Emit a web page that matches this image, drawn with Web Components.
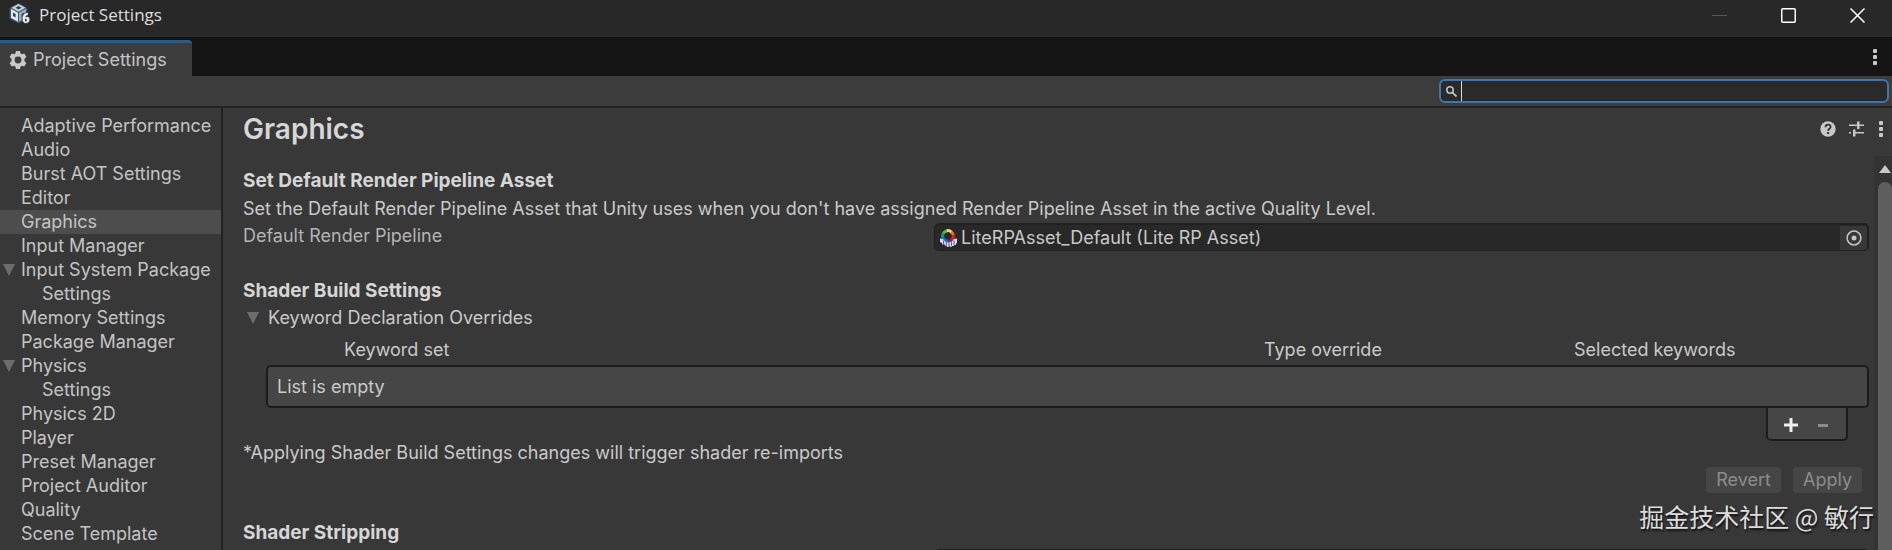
<!DOCTYPE html>
<html lang="en">
<head>
<meta charset="utf-8">
<title>Project Settings</title>
<style>
  body { margin: 0; background: #383838; }
</style>
</head>
<body>
<settings-window></settings-window>

<script>
const BASE = `
  *, *::before, *::after { box-sizing: border-box; }
  button { all: unset; box-sizing: border-box; display: flex; align-items: center; justify-content: center; }
  svg { display: block; }
  a { color: inherit; text-decoration: none; }
  h1, h2, p, ul { margin: 0; padding: 0; }
`;

function define(name, markup, setup) {
  const template = document.createElement('template');
  template.innerHTML = markup;
  customElements.define(name, class extends HTMLElement {
    constructor() {
      super();
      const root = this.attachShadow({ mode: 'open' });
      root.append(template.content.cloneNode(true));
      const base = document.createElement('style');
      base.textContent = BASE;
      root.prepend(base);
    }
    connectedCallback() { if (setup) setup(this, this.shadowRoot); }
  });
}

const DOTS = `<svg width="4" height="16" viewBox="0 0 4 16" fill="#c8c8c8"><rect y="0" width="4" height="4" rx="1"/><rect y="6" width="4" height="4" rx="1"/><rect y="12" width="4" height="4" rx="1"/></svg>`;

define('window-titlebar', `
<style>
  :host { display: flex; align-items: flex-start; height: 37px; padding: 3px 0 0 9px; background: #282828;
    color: #dedede; font: 17px/24px "Open Sans", "Noto Sans", sans-serif; }
  .name { flex: 1; padding-left: 8px; }
  button { width: 69px; height: 24px; }
</style>
<svg width="22" height="22" viewBox="0 0 22 22">
  <path d="M9.500 0 18.500 5v10.500L9.500 20.500.500 15.500V5Z" fill="#46535f"/>
  <path d="M9.500 1 16.500 4.800 9.500 8.800 2.500 4.800Z" fill="#c3d5e4"/>
  <path d="M2 5.800 9 9.800v9L2 15Z" fill="#dbe8f2"/>
  <path d="M17 5.800 10 9.800v9l7-3.800Z" fill="#9db1c3"/>
  <path d="M9.500 3 12.500 4.700 9.500 6.400 6.500 4.700ZM4 9.500l2.600 1.500v3.500L4 13ZM15 9.500 12.500 11v3.500L15 13Z" fill="#34424f"/>
  <path d="M19.500 9.500c-4.500-.3-6.500 2.500-6.500 6.500 0 2.800 1.400 4.500 3.700 4.500 2.500 0 4.300-1.700 4.300-4 0-1.900-1.200-3-2.800-3-.6 0-1 .1-1.400.3.400-1 1.400-1.700 2.700-1.800Z" fill="#e7edf2" stroke="#2c3640"/>
  <ellipse cx="16.900" cy="17" rx="1" ry="1.500" fill="#34424f"/>
</svg>
<span class="name"><slot></slot></span>
<button aria-label="Minimize" disabled><svg width="15" height="15" viewBox="0 0 15 15"><path d="M0 7.500h15" stroke="#555"/></svg></button>
<button aria-label="Maximize"><svg width="15" height="15" viewBox="0 0 15 15"><rect x=".75" y=".75" width="13.500" height="13.500" rx="1" fill="none" stroke="#fff" stroke-width="1.500"/></svg></button>
<button aria-label="Close"><svg width="15" height="15" viewBox="0 0 15 15"><path d="M.5.5l14 14M14.500.5l-14 14" stroke="#fff" stroke-width="1.500"/></svg></button>
`);

define('tab-strip', `
<style>
  :host { display: flex; justify-content: space-between; height: 39px; padding-top: 3px; background: #141414; color: #c4c4c4; }
  .tab { justify-content: flex-start; gap: 6px; height: 36px; width: 192px; padding: 0 9px; background: #3c3c3c;
    border-top: 3px solid #2c5d87; border-radius: 0 4px 0 0; font-size: 18px; line-height: 24px; white-space: nowrap; }
  .menu { width: 34px; height: 34px; }
</style>
<button class="tab" role="tab" aria-selected="true">
  <svg width="18" height="18" viewBox="0 0 18 18" fill="#c8c8c8"><path fill-rule="evenodd" d="M6.900 0h4.200l.5 2.400 1.300.8 2.400-.8 2.100 3.600-1.900 1.700v2.600l1.900 1.700-2.100 3.600-2.400-.8-1.300.8-.5 2.400H6.900l-.5-2.400-1.300-.8-2.400.8L.6 12l1.900-1.700V7.700L.6 6l2.100-3.600 2.400.8 1.300-.8ZM9 5.600a3.400 3.400 0 1 0 0 6.800 3.400 3.400 0 0 0 0-6.800Z"/></svg>
  <slot></slot>
</button>
<button class="menu" aria-label="Tab menu">${DOTS}</button>
`);

define('search-bar', `
<style>
  :host { display: flex; justify-content: flex-end; height: 32px; padding: 3px 3px 0; background: #3c3c3c; border-bottom: 2px solid #232323; }
  label { display: flex; align-items: center; width: 450px; height: 24px; padding-left: 5px; background: #2a2a2a;
    border: 2px solid #3f75a8; border-radius: 6px; }
  .caret { width: 1px; height: 20px; margin-left: 4px; background: #d8d8d8; }
  input { flex: 1; min-width: 0; height: 20px; padding: 0 4px; border: 0; outline: 0; background: none; color: #d2d2d2; font: inherit; }
</style>
<label>
  <svg width="11" height="11" viewBox="0 0 11 11" fill="none" stroke="#c4c4c4"><circle cx="4" cy="4" r="3.200" stroke-width="1.500"/><path d="M6.300 6.300l4.200 4.200" stroke-width="1.800"/></svg>
  <span class="caret"></span>
  <input type="text" aria-label="Search settings">
</label>
`);

define('tree-item', `
<style>
  :host { display: block; }
  a { display: flex; align-items: center; height: 24px; padding-left: 2px; white-space: nowrap; }
  .arrow { flex: none; width: 19px; }
  :host([child]) .arrow { width: 40px; }
  :host([selected]) a { background: #4d4d4d; }
  .arrow svg { display: none; }
  :host([open]) .arrow svg { display: block; }
</style>
<a href="#"><span class="arrow"><svg width="14" height="12" viewBox="0 0 14 12"><path d="M1 0h12L7 12Z" fill="#6c6c6c"/></svg></span><slot></slot></a>
`);

define('settings-tree', `
<style>
  :host { display: block; flex: none; width: 223px; padding-top: 6px; border-right: 2px solid #232323; color: #c4c4c4; overflow: hidden; }
</style>
<nav aria-label="Settings"><slot></slot></nav>
`);

define('page-header', `
<style>
  :host { display: flex; align-items: flex-start; height: 48px; padding: 2px 0 0 20px; color: #d6d6d6; }
  h1 { flex: 1; font-size: 28px; line-height: 38px; font-weight: 600; }
  button { width: 28px; height: 38px; }
  .menu { width: 22px; }
</style>
<h1><slot></slot></h1>
<button aria-label="Help"><svg width="16" height="16" viewBox="0 0 16 16"><circle cx="8" cy="8" r="7.700" fill="#c8c8c8"/><path d="M5.500 6.200C5.500 4.600 6.500 3.700 8 3.700s2.600.9 2.600 2.200c0 1.800-2.500 1.900-2.500 3.900" fill="none" stroke="#333" stroke-width="1.800"/><rect x="7.100" y="11" width="2" height="2" fill="#333"/></svg></button>
<button aria-label="Presets"><svg width="16" height="16" viewBox="0 0 16 16" fill="#c8c8c8"><path d="M1 3.500h8V.500h2.500v3H16V5h-4.500v3H9V5H1ZM1 11h2v1.500H1ZM5 8.500h2.500V11H16v1.500H7.500V15.500H5Z"/></svg></button>
<button class="menu" aria-label="More">${DOTS}</button>
`);

define('object-field', `
<style>
  :host { display: grid; grid-template-columns: 42.5% 1fr; height: 28px; margin-top: 2px; }
  label { line-height: 26px; color: #b4b4b4; }
  .field { display: flex; align-items: center; height: 28px; padding-left: 5px; background: #282828; border: 1px solid #202020; border-width: 2px 2px 1px 1px; border-radius: 5px; }
  svg { flex: none; }
  input { flex: 1; min-width: 0; height: 24px; padding: 0 0 0 4px; border: 0; outline: 0; background: none; color: #c8c8c8; font: inherit; }
  button { width: 27px; height: 24px; background: #373737; border-radius: 0 3px 3px 0; }
  :host([bare]) .field > * { visibility: hidden; }
</style>
<label for="value"></label>
<div class="field">
  <svg width="17" height="18" viewBox="0 0 17 18">
    <g fill="none" stroke-width="3">
      <path d="M3.300 9.500A5.300 5.300 0 0 1 3.500 4" stroke="#149a72"/>
      <path d="M3.400 4.300A5.300 5.300 0 0 1 7 1.700" stroke="#59bd3e"/>
      <path d="M6.800 1.700a5.300 5.300 0 0 1 4.700 1.400" stroke="#efd58b"/>
      <path d="M11.200 2.900A5.300 5.300 0 0 1 13.300 6" stroke="#f07824"/>
      <path d="M13.300 5.800a5.300 5.300 0 0 1-1.800 5.200" stroke="#e01c28"/>
      <path d="M11.800 10.800a5.300 5.300 0 0 1-4 1.200" stroke="#93203f"/>
      <path d="M8 12a5.300 5.300 0 0 1-5-3.500" stroke="#1769cf"/>
    </g>
    <path d="M0 9.500l3 .5 2 2.500 3 1 4-1 2-2.500 3-.5v4.500l-1 .5v1.500h-2V17h-2v1h-2v-1h-1v1H7v-1H5v-1.500H2V14L0 13Z" fill="#d4dcf2"/>
    <path d="M3.500 11.500V16M6.300 13v4.500M9 13.500V18M11.500 13v4.500M14 11.500V16" stroke="#4a5270" stroke-width=".9"/>
  </svg>
  <input id="value" type="text" readonly>
  <button aria-label="Select object"><svg width="16" height="16" viewBox="0 0 16 16"><circle cx="8" cy="8" r="6.900" fill="none" stroke="#c4c4c4" stroke-width="1.500"/><circle cx="8" cy="8" r="2.500" fill="#c4c4c4"/></svg></button>
</div>
`, (host, root) => {
  root.querySelector('label').textContent = host.getAttribute('label') || '';
  root.querySelector('input').value = host.getAttribute('value') || '';
});

define('settings-section', `
<style>
  :host { display: block; padding-bottom: 26px; }
  h2 { font-size: 19px; line-height: 28px; font-weight: 700; color: #d6d6d6; }
</style>
<h2></h2><slot></slot>
`, (host, root) => { root.querySelector('h2').textContent = host.getAttribute('heading'); });

define('keyword-list', `
<style>
  :host { display: flex; flex-direction: column; }
  .fold { align-self: flex-start; gap: 8px; height: 26px; padding-left: 3px; }
  table { table-layout: fixed; width: calc(100% - 23px); margin: 4px 0 0 23px; border-collapse: separate; border-spacing: 0; }
  th { height: 30px; padding: 0 0 1px 5px; font-weight: 400; line-height: 24px; text-align: left; }
  th:first-child { padding-left: 78px; }
  .type { width: 310px; }
  .selected { width: 300px; }
  td { height: 43px; padding: 0 9px; background: #464646; border: 2px solid #1c1c1c; border-radius: 5px; }
  .actions { display: flex; align-self: flex-end; width: 82px; height: 33px; margin-right: 21px; padding: 0 7px; background: #464646;
    border: 2px solid #1c1c1c; border-top: 0; border-radius: 0 0 5px 5px; }
  .actions button { width: 32px; height: 34px; }
</style>
<button class="fold" aria-expanded="true"><svg width="14" height="12" viewBox="0 0 14 12"><path d="M1 0h12L7 12Z" fill="#6c6c6c"/></svg><slot></slot></button>
<table>
  <thead><tr><th>Keyword set</th><th class="type">Type override</th><th class="selected">Selected keywords</th></tr></thead>
  <tbody><tr><td colspan="3">List is empty</td></tr></tbody>
</table>
<div class="actions">
  <button aria-label="Add"><svg width="14" height="14" viewBox="0 0 14 14"><path d="M7 0v14M0 7h14" stroke="#eee" stroke-width="3"/></svg></button>
  <button aria-label="Remove" disabled><svg width="10" height="3" viewBox="0 0 10 3"><path d="M0 1.500h10" stroke="#8c8c8c" stroke-width="3"/></svg></button>
</div>
`);

define('apply-bar', `
<style>
  :host { display: flex; justify-content: flex-end; gap: 12px; margin-top: 2px; padding-right: 7px; }
  button { height: 26px; padding: 0 10px; background: #464646; border-radius: 4px; color: #8c8c8c; line-height: 24px; }
</style>
<button disabled>Revert</button><button disabled>Apply</button>
`);

define('scroll-rail', `
<style>
  :host { display: flex; flex-direction: column; flex: none; width: 18px; padding-left: 4px; background: #333; overflow: hidden; }
  button { width: 14px; height: 26px; }
  .thumb { flex: 1; background: #5e5e5e; border-radius: 7px 7px 0 0; }
</style>
<button aria-label="Scroll up"><svg width="12" height="8" viewBox="0 0 12 8"><path d="M6 0l6 8H0Z" fill="#c8c8c8"/></svg></button>
<div class="thumb"></div>
`);

define('settings-window', `
<style>
  :host { position: relative; display: flex; flex-direction: column; height: 100vh; overflow: hidden; background: #383838;
    color: #cacaca; font: 18px/24px Inter, sans-serif; }
  .body { display: flex; flex: 1; min-height: 0; }
  main { display: flex; flex-direction: column; flex: 1; min-width: 0; }
  .view { display: flex; flex: 1; min-height: 0; }
  .content { flex: 1; min-width: 0; padding: 11px 5px 0 20px; overflow: hidden; }
  .intro { padding-top: 2px; }
  .mark { position: absolute; right: 18px; bottom: 16px; color: #dcdcdc; font: 25px/36px "Noto Sans CJK SC", sans-serif; text-shadow: 1px 2px 2px #111; }
</style>
<window-titlebar>Project Settings</window-titlebar>
<tab-strip>Project Settings</tab-strip>
<search-bar></search-bar>
<div class="body">
  <settings-tree>
    <tree-item>Adaptive Performance</tree-item>
    <tree-item>Audio</tree-item>
    <tree-item>Burst AOT Settings</tree-item>
    <tree-item>Editor</tree-item>
    <tree-item selected>Graphics</tree-item>
    <tree-item>Input Manager</tree-item>
    <tree-item open>Input System Package</tree-item>
    <tree-item child>Settings</tree-item>
    <tree-item>Memory Settings</tree-item>
    <tree-item>Package Manager</tree-item>
    <tree-item open>Physics</tree-item>
    <tree-item child>Settings</tree-item>
    <tree-item>Physics 2D</tree-item>
    <tree-item>Player</tree-item>
    <tree-item>Preset Manager</tree-item>
    <tree-item>Project Auditor</tree-item>
    <tree-item>Quality</tree-item>
    <tree-item>Scene Template</tree-item>
  </settings-tree>
  <main>
    <page-header>Graphics</page-header>
    <div class="view">
      <div class="content">
        <settings-section heading="Set Default Render Pipeline Asset">
          <p class="intro">Set the Default Render Pipeline Asset that Unity uses when you don't have assigned Render Pipeline Asset in the active Quality Level.</p>
          <object-field label="Default Render Pipeline" value="LiteRPAsset_Default (Lite RP Asset)"></object-field>
        </settings-section>
        <settings-section heading="Shader Build Settings">
          <keyword-list>Keyword Declaration Overrides</keyword-list>
          <p>*Applying Shader Build Settings changes will trigger shader re-imports</p>
          <apply-bar></apply-bar>
        </settings-section>
        <settings-section heading="Shader Stripping">
          <object-field bare></object-field>
        </settings-section>
      </div>
      <scroll-rail></scroll-rail>
    </div>
  </main>
</div>
<div class="mark" lang="zh">掘金技术社区 @ 敏行</div>
`);
</script>
</body>
</html>
